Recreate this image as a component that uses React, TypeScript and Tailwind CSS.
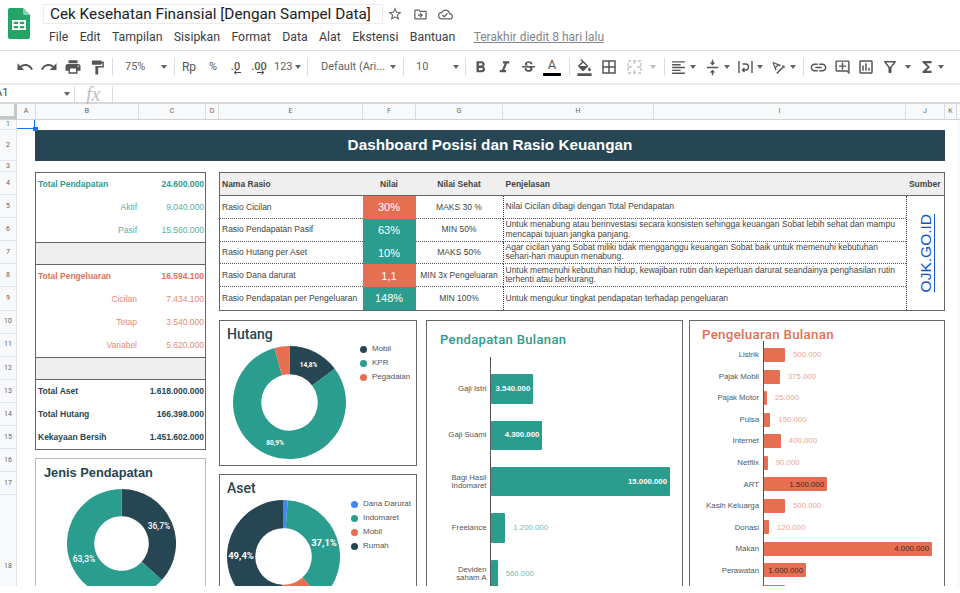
import {
  MdUndo, MdRedo, MdPrint, MdFormatPaint, MdFormatBold, MdFormatItalic, MdStrikethroughS,
  MdFormatColorFill, MdBorderAll, MdFormatAlignLeft, MdVerticalAlignCenter, MdTextRotationAngleup,
  MdLink, MdOutlineAddComment, MdOutlineInsertChart, MdOutlineFilterAlt, MdFunctions,
  MdStarBorder, MdOutlineDriveFileMove, MdOutlineCloudDone,
} from "react-icons/md";

const TEAL = "#2a9d8f";
const NAVY = "#264653";
const ORANGE = "#e76f51";

const menus = ["File", "Edit", "Tampilan", "Sisipkan", "Format", "Data", "Alat", "Ekstensi", "Bantuan"];

const columns = [
  ["A", 19], ["B", 103], ["C", 67], ["D", 13], ["E", 144], ["F", 53], ["G", 87], ["H", 151], ["I", 252], ["J", 39], ["K", 12],
] as const;

const rowHeights = [10, 31, 11, 23.1, 23.1, 23.1, 23.1, 23.1, 23.1, 23.1, 23.1, 23.1, 23.1, 23.1, 23.1, 23.1, 23.1, 142];

const ratios = [
  { name: "Rasio Cicilan", value: "30%", color: "bg-[#e76f51]", target: "MAKS 30 %", note: "Nilai Cicilan dibagi dengan Total Pendapatan" },
  { name: "Rasio Pendapatan Pasif", value: "63%", color: "bg-[#2a9d8f]", target: "MIN 50%", note: "Untuk menabung atau berinvestasi secara konsisten sehingga keuangan Sobat lebih sehat dan mampu mencapai tujuan jangka panjang." },
  { name: "Rasio Hutang per Aset", value: "10%", color: "bg-[#2a9d8f]", target: "MAKS 50%", note: "Agar cicilan yang Sobat miliki tidak mengganggu keuangan Sobat baik untuk memenuhi kebutuhan sehari-hari maupun menabung." },
  { name: "Rasio Dana darurat", value: "1,1", color: "bg-[#e76f51]", target: "MIN 3x Pengeluaran", note: "Untuk memenuhi kebutuhan hidup, kewajiban rutin dan keperluan darurat seandainya penghasilan rutin terhenti atau berkurang." },
  { name: "Rasio Pendapatan per Pengeluaran", value: "148%", color: "bg-[#2a9d8f]", target: "MIN 100%", note: "Untuk mengukur tingkat pendapatan terhadap pengeluaran" },
];

const income = [
  { label: ["Gaji Istri"], value: 3540000 },
  { label: ["Gaji Suami"], value: 4300000 },
  { label: ["Bagi Hasil", "Indomaret"], value: 15000000 },
  { label: ["Freelance"], value: 1200000 },
  { label: ["Deviden", "saham A"], value: 560000 },
];

const spending = [
  { label: "Listrik", value: 500000 },
  { label: "Pajak Mobil", value: 375000 },
  { label: "Pajak Motor", value: 25000 },
  { label: "Pulsa", value: 150000 },
  { label: "Internet", value: 400000 },
  { label: "Netflix", value: 90000 },
  { label: "ART", value: 1500000 },
  { label: "Kasih Keluarga", value: 500000 },
  { label: "Donasi", value: 120000 },
  { label: "Makan", value: 4000000 },
  { label: "Perawatan", value: 1000000 },
  { label: "", value: 500000 },
];

const money = (n: number) => n.toString().replace(/\B(?=(\d{3})+$)/g, ".");

const Caret = ({ color = "border-t-[#5f6368]" }: { color?: string }) => (
  <span className={`h-0 w-0 border-x-[3.5px] border-t-[4px] border-x-transparent ${color}`} />
);

const Sep = ({ className = "" }: { className?: string }) => <div className={`h-[18px] w-px shrink-0 bg-[#dadce0] ${className}`} />;

const Btn = ({ w, children, className = "" }: { w: string; children: React.ReactNode; className?: string }) => (
  <div className={`flex shrink-0 items-center justify-center text-[#555] ${w} ${className}`}>{children}</div>
);

const SheetsLogo = () => (
  <svg width="22" height="31" viewBox="0 0 22 31" className="shrink-0">
    <path d="M2 0h13l7 7v22a2 2 0 0 1-2 2H2a2 2 0 0 1-2-2V2a2 2 0 0 1 2-2z" fill="#23a566" />
    <path d="M15 0l7 7h-5a2 2 0 0 1-2-2z" fill="#8ed1b1" />
    <path d="M4 12h14v10H4z M5.8 13.8v2.3h4.3v-2.3z M11.9 13.8v2.3h4.3v-2.3z M5.8 17.9v2.3h4.3v-2.3z M11.9 17.9v2.3h4.3v-2.3z" fill="#fff" fillRule="evenodd" />
  </svg>
);

const Toolbar = () => (
  <div className="flex h-[33px] shrink-0 items-center whitespace-nowrap border-t border-[#dadce0] pl-[13px] font-['Roboto',sans-serif] text-[11px] text-[#5f6368]">
    <Btn w="w-6"><MdUndo size={18} /></Btn>
    <Btn w="w-6"><MdRedo size={18} /></Btn>
    <Btn w="w-6"><MdPrint size={18} /></Btn>
    <Btn w="w-6"><MdFormatPaint size={17} /></Btn>
    <Sep className="ml-[3px]" />
    <div className="flex w-[61px] shrink-0 items-center justify-between pl-3 pr-[7px]"><span>75%</span><Caret /></div>
    <Sep />
    <Btn w="w-[28px] ml-[-1px]" className="text-[12px]"><span className="pl-[2px]">Rp</span></Btn>
    <Btn w="w-[22px]" className="text-[11px]">%</Btn>
    <Btn w="w-[23px]" className="relative text-[11px] font-medium">.0
      <svg width="8" height="5" className="absolute left-[9px] top-[11px]"><path d="M8 2.5H2M3.5 .5L1 2.5l2.5 2" stroke="#444" fill="none" /></svg>
    </Btn>
    <Btn w="w-6" className="relative text-[11px] font-medium">.00
      <svg width="8" height="5" className="absolute left-[10px] top-[11px]"><path d="M0 2.5h6M4.5 .5L7 2.5l-2.5 2" stroke="#444" fill="none" /></svg>
    </Btn>
    <div className="flex w-[33px] shrink-0 items-center gap-[2px] pl-[3px] text-[#5f6368]"><span>123</span><Caret /></div>
    <Sep className="ml-[3px]" />
    <div className="flex w-[95px] shrink-0 items-center justify-between pl-[13px] pr-[7px]"><span>Default (Ari...</span><Caret /></div>
    <Sep />
    <div className="flex w-[61px] shrink-0 items-center justify-between pl-3 pr-[6px]"><span>10</span><Caret /></div>
    <Sep />
    <Btn w="w-6 ml-[2px]"><MdFormatBold size={19} /></Btn>
    <Btn w="w-6"><MdFormatItalic size={19} /></Btn>
    <Btn w="w-6"><MdStrikethroughS size={17} /></Btn>
    <div className="flex w-6 shrink-0 flex-col items-center">
      <span className="text-[13px] leading-[13px] text-[#555]">A</span>
      <span className="mt-[2px] h-[3.5px] w-[18px] bg-black" />
    </div>
    <Sep className="ml-[5px]" />
    <Btn w="w-6 ml-[2px]"><MdFormatColorFill size={17} /></Btn>
    <Btn w="w-[26px]"><MdBorderAll size={18} /></Btn>
    <Btn w="w-6">
      <svg width="15" height="14" viewBox="0 0 15 14" fill="none" stroke="#bdc1c6" strokeWidth="1.3">
        <path d="M1 1h13v12H1z" strokeDasharray="3 2" />
        <path d="M1 7h4M10 7h4M7.5 1v3M7.5 10v3" />
      </svg>
    </Btn>
    <Btn w="w-[14px]"><Caret color="border-t-[#bdc1c6]" /></Btn>
    <Sep className="ml-1" />
    <Btn w="w-5 ml-[3px]"><MdFormatAlignLeft size={17} /></Btn>
    <Btn w="w-[10px]"><Caret /></Btn>
    <Btn w="w-5 ml-1"><MdVerticalAlignCenter size={17} /></Btn>
    <Btn w="w-[10px]"><Caret /></Btn>
    <Btn w="w-5 ml-[3px]">
      <svg width="15" height="14" viewBox="0 0 15 14" fill="none" stroke="#555" strokeWidth="1.4">
        <path d="M1 1v12M14 1v12M4.5 4h3a3 3 0 0 1 0 6h-3M6.5 8L4.5 10l2 2" />
      </svg>
    </Btn>
    <Btn w="w-[10px]"><Caret /></Btn>
    <Btn w="w-5 ml-[3px]"><MdTextRotationAngleup size={17} /></Btn>
    <Btn w="w-[10px]"><Caret /></Btn>
    <Sep className="ml-[5px]" />
    <Btn w="w-6 ml-[2px]"><MdLink size={19} /></Btn>
    <Btn w="w-6"><MdOutlineAddComment size={17} /></Btn>
    <Btn w="w-6"><MdOutlineInsertChart size={18} /></Btn>
    <Btn w="w-6"><MdOutlineFilterAlt size={18} /></Btn>
    <Btn w="w-3"><Caret /></Btn>
    <Btn w="w-5 ml-[3px]"><MdFunctions size={18} /></Btn>
    <Btn w="w-2"><Caret /></Btn>
  </div>
);

const SummaryRow = ({ label, value, color, sub }: { label: string; value: string; color: string; sub?: boolean }) => (
  <div className={`flex h-[23.1px] items-center justify-between pl-[2px] pr-[1px] ${color}`}>
    <span className={sub ? "w-[99px] text-right font-normal opacity-80" : "font-bold"}>{label}</span>
    <span className={sub ? "font-normal opacity-80" : "font-bold"}>{value}</span>
  </div>
);

function arc(cx: number, cy: number, r: number, ir: number, from: number, to: number) {
  const pt = (rad: number, t: number) => {
    const a = t * 2 * Math.PI;
    return `${(cx + rad * Math.sin(a)).toFixed(2)} ${(cy - rad * Math.cos(a)).toFixed(2)}`;
  };
  const big = to - from > 0.5 ? 1 : 0;
  return `M${pt(r, from)}A${r} ${r} 0 ${big} 1 ${pt(r, to)}L${pt(ir, to)}A${ir} ${ir} 0 ${big} 0 ${pt(ir, from)}Z`;
}

type Slice = { share: number; color: string };
type Tag = { text: string; x: number; y: number; size: number; weight?: number };

const Donut = ({ slices, r, tags }: { slices: Slice[]; r: number; tags: Tag[] }) => {
  let at = 0;
  return (
    <svg width={r * 2} height={r * 2} className="block shrink-0">
      {slices.map((s) => {
        const d = arc(r, r, r, r / 2, at, at + s.share);
        at += s.share;
        return <path key={s.color} d={d} fill={s.color} />;
      })}
      {tags.map((t) => (
        <text key={t.text} x={t.x} y={t.y} textAnchor="middle" dominantBaseline="middle" fill="#fff" fontSize={t.size} fontWeight={t.weight ?? 700} fontFamily="Roboto, sans-serif">
          {t.text}
        </text>
      ))}
    </svg>
  );
};

const Legend = ({ items, className }: { items: [string, string][]; className: string }) => (
  <div className={`flex flex-col font-['Liberation_Sans',Arial,sans-serif] text-[8px] text-[#555] ${className}`}>
    {items.map(([name, color]) => (
      <div key={name} className="flex h-[14px] items-center gap-[5px]">
        <span className="h-[7px] w-[7px] shrink-0 rounded-full" style={{ background: color }} />
        <span className="whitespace-nowrap">{name}</span>
      </div>
    ))}
  </div>
);

const ChartTitle = ({ className, children }: { className: string; children: React.ReactNode }) => (
  <div className={`font-['Roboto',sans-serif] font-medium leading-4 ${className}`}>{children}</div>
);

export default function App() {
  return (
    <div className="flex h-[593px] w-[960px] flex-col overflow-hidden bg-white font-['Liberation_Sans',Arial,sans-serif]">
      {/* title and menu */}
      <div className="flex h-[50px] shrink-0 pl-2 pt-2 font-['Roboto',sans-serif]">
        <SheetsLogo />
        <div className="ml-[13px] -mt-1 flex flex-col">
          <div className="flex items-center">
            <div className="flex h-5 w-[340px] items-center whitespace-nowrap border border-[#ececec] pl-[6px] text-[15.3px] leading-5 text-[#202124]">
              Cek Kesehatan Finansial [Dengan Sampel Data]
            </div>
            <MdStarBorder size={16} className="ml-[4px] text-[#5f6368]" />
            <MdOutlineDriveFileMove size={15} className="ml-[10px] text-[#5f6368]" />
            <MdOutlineCloudDone size={15} className="ml-[10px] text-[#5f6368]" />
          </div>
          <div className="mt-[5px] flex items-center gap-[11.4px] whitespace-nowrap pl-[6px] text-[12.3px] leading-4 text-[#3c4043]">
            {menus.map((m) => <span key={m}>{m}</span>)}
            <span className="ml-[7px] text-[12px] text-[#80868b] underline">Terakhir diedit 8 hari lalu</span>
          </div>
        </div>
      </div>

      <Toolbar />

      {/* formula bar */}
      <div className="flex h-[21px] shrink-0 items-center border-y-2 border-[#e8eaed] border-b-[#d6d8db] text-[#444]">
        <span className="-ml-[5px] w-[69px] font-['Roboto',sans-serif] text-[11px]">A1</span>
        <Caret />
        <div className="ml-[4px] h-4 w-px bg-[#dadce0]" />
        <span className="ml-[11px] w-[26px] font-['Liberation_Serif',serif] text-[20px] italic leading-4 text-[#bdc1c6]">fx</span>
        <div className="h-4 w-px bg-[#dadce0]" />
      </div>

      {/* column letters */}
      <div className="flex h-[16px] shrink-0 border-b border-[#d0d2d6] bg-[#f8f9fa] font-['Roboto',sans-serif] text-[7px] text-[#5f6368]">
        <div className="w-[17px] shrink-0 border-b-[3px] border-r-[3px] border-[#c4c7c5]" />
        {columns.map(([name, w]) => (
          <div key={name} className="flex shrink-0 items-center justify-center border-r border-[#dadce0]" style={{ width: w }}>
            {name}
          </div>
        ))}
      </div>

      <div className="flex h-[466px] shrink-0 overflow-hidden">
        {/* row numbers */}
        <div className="relative w-[17px] shrink-0 bg-[#f8f9fa] font-['Roboto',sans-serif] text-[7px] text-[#5f6368]">
          {rowHeights.map((h, i) => (
            <div key={i} className="flex items-center justify-center border-b border-r border-[#e3e5e8]" style={{ height: h }}>
              {i + 1}
            </div>
          ))}
        </div>

        <div className="relative w-[940px] shrink-0 pl-[18px] pt-[10px]">
          {/* selected A1 */}
          <div className="absolute left-0 top-0 h-[9px] w-[18px] border-b border-r border-[#1a73e8]" />
          <div className="absolute left-[16px] top-[7px] h-1 w-[5px] bg-[#1a73e8]" />

          <div className="flex h-[31px] w-[910px] items-center justify-center bg-[#264653] text-[15.3px] font-bold text-white">
            Dashboard Posisi dan Rasio Keuangan
          </div>

          <div className="mt-[11px] flex gap-[13px]">
            {/* left column */}
            <div className="flex w-[171px] shrink-0 flex-col gap-2">
              <div className="flex h-[277.5px] flex-col border-[1.5px] border-[#666] text-[8.5px]">
                <SummaryRow label="Total Pendapatan" value="24.600.000" color="text-[#2a9d8f]" />
                <SummaryRow label="Aktif" value="9.040.000" color="text-[#2a9d8f]" sub />
                <SummaryRow label="Pasif" value="15.560.000" color="text-[#2a9d8f]" sub />
                <div className="h-[23.1px] border-y-[1.5px] border-[#666] bg-[#efefef]" />
                <SummaryRow label="Total Pengeluaran" value="16.594.100" color="text-[#e0735a]" />
                <SummaryRow label="Cicilan" value="7.434.100" color="text-[#d9705a]" sub />
                <SummaryRow label="Tetap" value="3.540.000" color="text-[#d9705a]" sub />
                <SummaryRow label="Variabel" value="5.620.000" color="text-[#d9705a]" sub />
                <div className="h-[23.1px] border-y-[1.5px] border-[#666] bg-[#efefef]" />
                <SummaryRow label="Total Aset" value="1.618.000.000" color="text-[#264653]" />
                <SummaryRow label="Total Hutang" value="166.398.000" color="text-[#264653]" />
                <SummaryRow label="Kekayaan Bersih" value="1.451.602.000" color="text-[#264653]" />
              </div>

              <div className="h-[160px] border-[1.5px] border-[#bbb] pl-[8px] pt-[6px]">
                <div className="text-[12.8px] font-bold leading-4 text-[#264653]">Jenis Pendapatan</div>
                <div className="ml-[23px] mt-[8px]">
                  <Donut
                    r={54.5}
                    slices={[{ share: 0.367, color: NAVY }, { share: 0.633, color: TEAL }]}
                    tags={[{ text: "36,7%", x: 92, y: 38, size: 8.5, weight: 500 }, { text: "63,3%", x: 17, y: 71, size: 8.5, weight: 500 }]}
                  />
                </div>
              </div>
            </div>

            {/* right column */}
            <div className="flex w-[726px] shrink-0 flex-col gap-[9px]">
              <div className="grid h-[139px] grid-cols-[142.5px_53px_87px_403px_1fr] grid-rows-[23px_repeat(5,1fr)] border-[1.5px] border-[#666] text-[8.5px] text-[#444]">
                <div className="flex items-center border-b-[1.5px] border-[#666] bg-[#efefef] pl-[2px] font-bold">Nama Rasio</div>
                <div className="flex items-center justify-center border-b-[1.5px] border-[#666] bg-[#efefef] font-bold">Nilai</div>
                <div className="flex items-center justify-center border-b-[1.5px] border-[#666] bg-[#efefef] font-bold">Nilai Sehat</div>
                <div className="flex items-center border-b-[1.5px] border-[#666] bg-[#efefef] pl-[3px] font-bold">Penjelasan</div>
                <div className="flex items-center justify-center border-b-[1.5px] border-[#666] bg-[#efefef] font-bold">Sumber</div>

                {ratios.map((r, i) => {
                  const line = i < ratios.length - 1 ? "border-b border-dotted border-b-[#555]" : "";
                  return (
                    <div key={r.name} className="contents">
                      <div className={`flex items-center whitespace-nowrap pl-[2px] ${line}`}>{r.name}</div>
                      <div className={`flex items-center justify-center text-[11px] font-medium text-white ${r.color}`}>{r.value}</div>
                      <div className={`flex items-center justify-center whitespace-nowrap ${line}`}>{r.target}</div>
                      <div className={`flex items-center border-l border-dotted border-l-[#333] pl-[2px] pr-[6px] leading-[9.5px] ${line}`}>
                        <span>{r.note}</span>
                      </div>
                      {i === 0 && (
                        <div className="row-span-5 flex items-center justify-center border-l border-dotted border-l-[#333]">
                          <a href="#ojk" className="rotate-180 font-['Liberation_Sans',Arial,sans-serif] text-[15.5px] text-[#1155cc] underline [writing-mode:vertical-rl]">
                            OJK.GO.ID
                          </a>
                        </div>
                      )}
                    </div>
                  );
                })}
              </div>

              <div className="flex">
                <div className="flex w-[198px] shrink-0 flex-col gap-2">
                  <div className="relative h-[146px] border-[1.5px] border-[#666] pl-[7px] pt-[5px]">
                    <ChartTitle className="text-[14px] text-[#264653]">Hutang</ChartTitle>
                    <div className="ml-[6px] mt-[3.5px]">
                      <Donut
                        r={56.5}
                        slices={[{ share: 0.148, color: NAVY }, { share: 0.809, color: TEAL }, { share: 0.043, color: ORANGE }]}
                        tags={[{ text: "14,8%", x: 75.5, y: 19, size: 6.5 }, { text: "80,9%", x: 42, y: 97, size: 6.5 }]}
                      />
                    </div>
                    <Legend className="absolute left-[140px] top-[21px]" items={[["Mobil", NAVY], ["KPR", TEAL], ["Pegadaian", ORANGE]]} />
                  </div>

                  <div className="relative h-[140px] border-[1.5px] border-[#666] pl-[7px] pt-[5px]">
                    <ChartTitle className="text-[14px] text-[#264653]">Aset</ChartTitle>
                    <div className="mt-[3.5px]">
                      <Donut
                        r={56.5}
                        slices={[{ share: 0.012, color: "#4285f4" }, { share: 0.371, color: TEAL }, { share: 0.123, color: ORANGE }, { share: 0.494, color: NAVY }]}
                        tags={[{ text: "37,1%", x: 97, y: 43, size: 9.5 }, { text: "49,4%", x: 14, y: 56, size: 9.5 }]}
                      />
                    </div>
                    <Legend className="absolute left-[131px] top-[22px]" items={[["Dana Darurat", "#4285f4"], ["Indomaret", TEAL], ["Mobil", ORANGE], ["Rumah", NAVY]]} />
                  </div>
                </div>

                <div className="ml-[9px] h-[290px] w-[257px] shrink-0 border-[1.5px] border-[#666] pt-[11px]">
                  <ChartTitle className="pl-[13px] text-[13px] tracking-[0.35px] text-[#2a9d8f]">Pendapatan Bulanan</ChartTitle>
                  <div className="mt-[9px] flex text-[7.8px] leading-[8px]">
                    <div className="w-[63px] shrink-0 pt-[9px] text-[#555]">
                      {income.map((d) => (
                        <div key={d.label[0]} className="flex h-[46.3px] flex-col items-end justify-center pr-[3.5px]">
                          {d.label.map((l) => <span key={l}>{l}</span>)}
                        </div>
                      ))}
                    </div>
                    <div className="h-[240px] flex-1 border-l border-[#555] pt-[9px]">
                      {income.map((d) => {
                        const w = (d.value / 15000000) * 179;
                        const inside = d.value > 2000000;
                        return (
                          <div key={d.value} className="flex h-[46.3px] items-center">
                            <div className="flex h-[29.5px] shrink-0 items-center justify-end rounded-[1px] bg-[#2a9d8f] pr-[3px] font-bold text-white" style={{ width: w }}>
                              {inside && money(d.value)}
                            </div>
                            {!inside && <span className="ml-2 text-[#6fbdb3]">{money(d.value)}</span>}
                          </div>
                        );
                      })}
                    </div>
                  </div>
                </div>

                <div className="ml-[6px] h-[290px] w-[256px] shrink-0 border-[1.5px] border-[#666] pt-[6px]">
                  <ChartTitle className="pl-[12px] text-[13.3px] tracking-[0.3px] text-[#e76f51]">Pengeluaran Bulanan</ChartTitle>
                  <div className="-mt-[2px] flex text-[7.8px]">
                    <div className="w-[73px] shrink-0 pt-[3.5px] text-[#4a5a64]">
                      {spending.map((d, i) => (
                        <div key={i} className="flex h-[21.53px] items-center justify-end whitespace-nowrap pr-1">{d.label}</div>
                      ))}
                    </div>
                    <div className="h-[260px] flex-1 border-l border-[#555] pt-[3.5px]">
                      {spending.map((d, i) => {
                        const w = (d.value / 4000000) * 168;
                        const inside = d.value >= 1000000;
                        return (
                          <div key={i} className="flex h-[21.53px] items-center">
                            <div className="flex h-[14px] shrink-0 items-center justify-end rounded-[1px] bg-[#e76f51] pr-[3px] text-[#3a2a26]" style={{ width: w }}>
                              {inside && money(d.value)}
                            </div>
                            {!inside && <span className="ml-2 text-[#eba593]">{money(d.value)}</span>}
                          </div>
                        );
                      })}
                    </div>
                  </div>
                </div>
              </div>
            </div>
          </div>
        </div>

        <div className="w-[3px] shrink-0 bg-[#f8f9fa]" />
      </div>
    </div>
  );
}
